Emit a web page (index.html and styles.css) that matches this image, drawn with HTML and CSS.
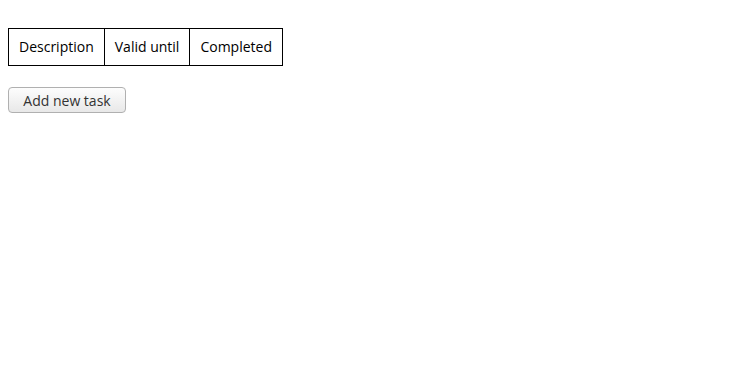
FILE: index.html
```html
<!DOCTYPE html>
<html>
<head>
<meta charset="utf-8">
<link rel="stylesheet" href="styles.css">
</head>
<body>
<table class="tasks">
  <thead>
    <tr><th>Description</th><th>Valid until</th><th>Completed</th></tr>
  </thead>
</table>
<button class="add-btn">Add new task</button>
</body>
</html>
```
FILE: styles.css
```css
body {
  margin: 8px;
  font-family: "Open Sans", "DejaVu Sans", sans-serif;
  background: #fff;
}
.tasks {
  border-collapse: collapse;
  margin-top: 20px;
}
.tasks th {
  border: 1px solid #000;
  padding: 9px 10px;
  font-weight: normal;
  font-size: 14px;
  line-height: 18px;
  color: #000;
}
.add-btn {
  display: block;
  margin-top: 21px;
  width: 118px;
  height: 26px;
  padding: 0;
  font-family: inherit;
  font-size: 14px;
  color: #333;
  border: 1px solid #b0b0b0;
  border-radius: 4px;
  background: linear-gradient(#fdfdfd, #e8e8e8);
}
```
